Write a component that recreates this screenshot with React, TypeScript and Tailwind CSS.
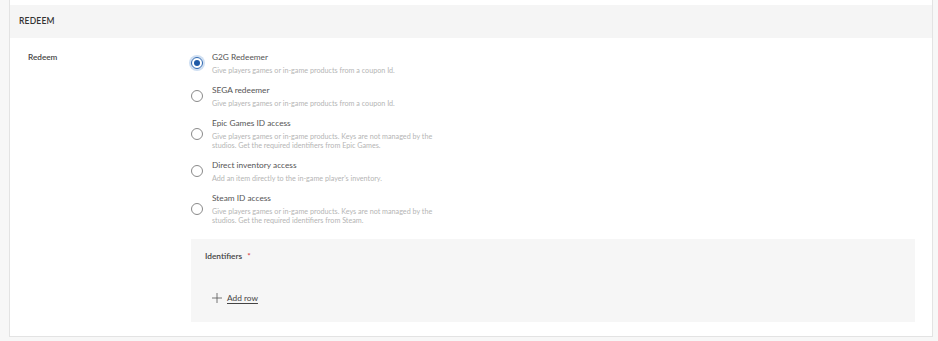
import React from "react";

type Option = {
  title: string;
  lines: string[];
  checked?: boolean;
};

const options: Option[] = [
  {
    title: "G2G Redeemer",
    lines: ["Give players games or in-game products from a coupon Id."],
    checked: true,
  },
  {
    title: "SEGA redeemer",
    lines: ["Give players games or in-game products from a coupon Id."],
  },
  {
    title: "Epic Games ID access",
    lines: [
      "Give players games or in-game products. Keys are not managed by the",
      "studios. Get the required identifiers from Epic Games.",
    ],
  },
  {
    title: "Direct inventory access",
    lines: ["Add an item directly to the in-game player's inventory."],
  },
  {
    title: "Steam ID access",
    lines: [
      "Give players games or in-game products. Keys are not managed by the",
      "studios. Get the required identifiers from Steam.",
    ],
  },
];

function Radio({ checked }: { checked?: boolean }) {
  if (checked) {
    return (
      <span className="flex h-[12px] w-[12px] shrink-0 items-center justify-center rounded-full border border-[#2d67b0] shadow-[0_0_0_2px_#cfdff2]">
        <span className="h-[6px] w-[6px] rounded-full bg-[#1f5aa6]" />
      </span>
    );
  }
  return (
    <span className="h-[12px] w-[12px] shrink-0 rounded-full border border-[#8a8a8a] bg-white" />
  );
}

export default function App() {
  return (
    <div className="min-h-screen bg-[#f7f7f7] pr-[5px] pl-[9px] font-['Lato',sans-serif]">
      <div className="border-x border-b border-[#e3e3e3] bg-white pt-[5px] pb-[14px]">
        <div className="flex h-[33px] items-center bg-[#f5f5f5] pl-[9px] text-[8.5px] font-semibold tracking-[0.2px] text-[#333]">
          REDEEM
        </div>
        <div className="flex pt-[13px]">
          <div className="w-[181px] shrink-0 pl-[18px] text-[8.2px] leading-[12px] font-semibold text-[#444]">
            Redeem
          </div>
          <div className="flex flex-1 flex-col pr-[17px]">
            <div className="flex flex-col gap-[9px]">
              {options.map((o) => (
                <div key={o.title} className="flex items-center gap-[9px]">
                  <Radio checked={o.checked} />
                  <div className="flex flex-col">
                    <span className="text-[8.3px] leading-[12px] text-[#555]">
                      {o.title}
                    </span>
                    <div className="mt-[3px] flex flex-col text-[7.2px] leading-[9px] text-[#b5b5b5]">
                      {o.lines.map((l) => (
                        <span key={l}>{l}</span>
                      ))}
                    </div>
                  </div>
                </div>
              ))}
            </div>
            <div className="mt-[14px] flex h-[83px] flex-col bg-[#f6f6f6] pl-[14px]">
              <div className="mt-[11px] text-[8.3px] leading-[12px] font-semibold text-[#444]">
                Identifiers <span className="ml-[3px] text-[#d9363e]">*</span>
              </div>
              <div className="mt-[30px] flex items-center gap-[5px] pl-[7px]">
                <svg width="10" height="10" viewBox="0 0 10 10" className="text-[#555]">
                  <path d="M5 0v10M0 5h10" stroke="currentColor" strokeWidth="0.8" fill="none" />
                </svg>
                <span className="text-[8.3px] leading-[12px] text-[#444] underline underline-offset-2">
                  Add row
                </span>
              </div>
            </div>
          </div>
        </div>
      </div>
    </div>
  );
}
